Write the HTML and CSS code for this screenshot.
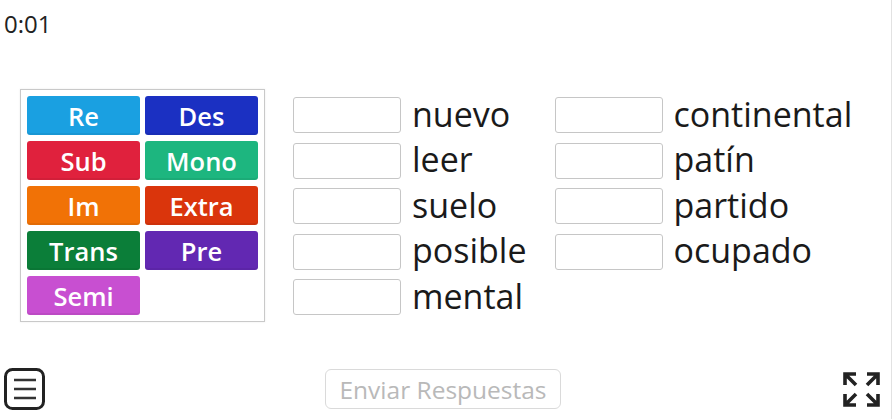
FILE: index.html
```html
<!DOCTYPE html>
<html lang="es">
<head>
<meta charset="utf-8">
<title>Prefijos</title>
<link rel="stylesheet" href="styles.css">
</head>
<body>
<div class="app">
  <div class="timer">0:01</div>
  <div class="board">
    <div class="tiles">
      <div class="tile t-re">Re</div>
      <div class="tile t-des">Des</div>
      <div class="tile t-sub">Sub</div>
      <div class="tile t-mono">Mono</div>
      <div class="tile t-im">Im</div>
      <div class="tile t-extra">Extra</div>
      <div class="tile t-trans">Trans</div>
      <div class="tile t-pre">Pre</div>
      <div class="tile t-semi">Semi</div>
    </div>
    <div class="col">
      <div class="row"><span class="slot"></span><span class="word">nuevo</span></div>
      <div class="row"><span class="slot"></span><span class="word">leer</span></div>
      <div class="row"><span class="slot"></span><span class="word">suelo</span></div>
      <div class="row"><span class="slot"></span><span class="word">posible</span></div>
      <div class="row"><span class="slot"></span><span class="word">mental</span></div>
    </div>
    <div class="col">
      <div class="row"><span class="slot"></span><span class="word">continental</span></div>
      <div class="row"><span class="slot"></span><span class="word">patín</span></div>
      <div class="row"><span class="slot"></span><span class="word">partido</span></div>
      <div class="row"><span class="slot"></span><span class="word">ocupado</span></div>
    </div>
  </div>
  <div class="footer">
    <svg class="menu" width="41" height="42" viewBox="0 0 41 42">
      <rect x="1.5" y="1.5" width="38" height="39" rx="7" fill="none" stroke="#222" stroke-width="3"/>
      <path d="M10 12H32M10 21H32M10 30H32" stroke="#333" stroke-width="2.6"/>
    </svg>
    <button class="send">Enviar Respuestas</button>
    <svg class="full" width="37" height="35" viewBox="0 0 37 35">
      <g fill="none" stroke="#222" stroke-width="3.6">
        <path d="M2 13V2H13M2 2L13 13"/>
        <path d="M24 2H35V13M35 2L24 13"/>
        <path d="M2 22V33H13M2 33L13 22"/>
        <path d="M24 33H35V22M35 33L24 22"/>
      </g>
    </svg>
  </div>
</div>
</body>
</html>
```
FILE: styles.css
```css
html, body {
  margin: 0;
  padding: 0;
  background: #fff;
}
body {
  font-family: "Open Sans", "Noto Sans", sans-serif;
  color: #1f1f1f;
}
.app {
  width: 891px;
  height: 419px;
  border-right: 1px solid #e2e2e2;
  display: flex;
  flex-direction: column;
}
.timer {
  padding: 8px 0 0 4px;
  font-size: 24px;
  line-height: 31px;
  color: #222;
}
.board {
  display: flex;
  align-items: flex-start;
  margin-top: 50px;
  padding-left: 20px;
  gap: 28px;
}
.tiles {
  display: grid;
  grid-template-columns: 113px 113px;
  grid-auto-rows: 39px;
  column-gap: 5px;
  row-gap: 6px;
  padding: 6px;
  border: 1px solid #c9c9c9;
  box-shadow: 0 0 2px rgba(0,0,0,0.08);
}
.tile {
  border-radius: 3px;
  color: #fff;
  font-weight: 600;
  font-size: 25.5px;
  display: flex;
  align-items: center;
  justify-content: center;
  box-shadow: inset 0 -2px 0 rgba(0,0,0,0.06);
}
.t-re { background: #1aa0e1; }
.t-des { background: #1b30c2; }
.t-sub { background: #e0213d; }
.t-mono { background: #1db67f; }
.t-im { background: #f17206; }
.t-extra { background: #da350c; }
.t-trans { background: #0b7e39; }
.t-pre { background: #6228b2; }
.t-semi { background: #c84fd1; }
.col {
  display: flex;
  flex-direction: column;
  gap: 9.5px;
  margin-top: 8px;
}
.row {
  display: flex;
  align-items: center;
  gap: 11px;
  height: 36px;
}
.slot {
  width: 108px;
  height: 36px;
  box-sizing: border-box;
  border: 1px solid #c6c6c6;
  border-radius: 3px;
  background: #fff;
}
.word {
  font-size: 34px;
  line-height: 36px;
  margin-top: -3px;
  color: #1a1a1a;
}
.footer {
  margin-top: auto;
  display: flex;
  align-items: center;
  justify-content: space-between;
  padding: 0 11px 9px 4px;
}
.menu {
  display: block;
}
.send {
  width: 236px;
  height: 40px;
  margin-left: -2px;
  border: 1px solid #dadada;
  border-radius: 6px;
  background: #fff;
  font-family: "Open Sans", "Noto Sans", sans-serif;
  font-size: 24.5px;
  color: #b9b9b9;
  padding: 0;
}
.full {
  display: block;
}
```
